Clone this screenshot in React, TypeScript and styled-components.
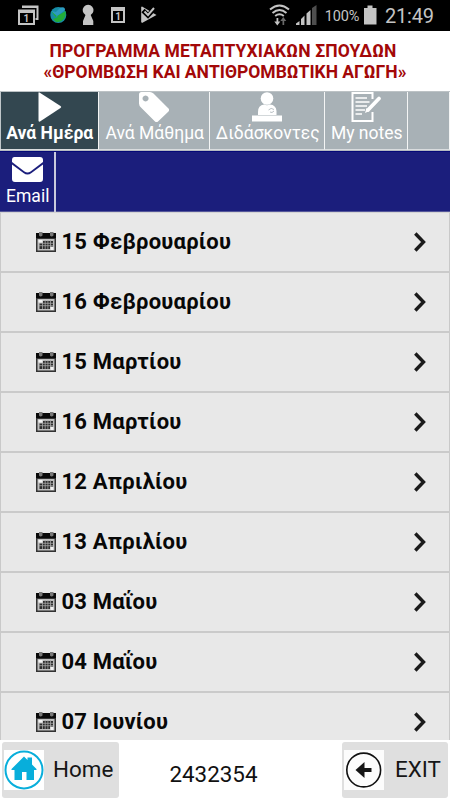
import React from "react";
import styled, { createGlobalStyle } from "styled-components";

const Global = createGlobalStyle`
  * { box-sizing: border-box; }
  body { margin: 0; background: #fff; font-family: Roboto, "Noto Sans", sans-serif; }
`;

const Screen = styled.div`
  width: 450px;
  height: 800px;
  display: flex;
  flex-direction: column;
  overflow: hidden;
  background: #fff;
`;

const StatusBar = styled.div`
  height: 31px;
  flex: none;
  background: #000;
  color: #c4c4c4;
`;

const Title = styled.h1`
  margin: 0;
  height: 60px;
  flex: none;
  padding-top: 10px;
  color: #a30808;
  font-size: 17.5px;
  font-weight: 700;
  line-height: 20.5px;
  text-align: center;
`;

const Line = styled.div<{ $spacing?: number; $inset?: number }>`
  white-space: nowrap;
  letter-spacing: ${(p) => p.$spacing ?? 0}px;
  padding-right: ${(p) => p.$inset ?? 0}px;
`;

const Tabs = styled.nav`
  display: grid;
  grid-template-columns: 99px 111px 115px 83px 42px;
  height: 60px;
  flex: none;
  background: #a8b1b6;
  border-top: 1px solid #bcc2c5;
  border-bottom: 1px solid #b4bac0;
`;

const Tab = styled.div<{ $active?: boolean }>`
  display: flex;
  flex-direction: column;
  align-items: center;
  height: 58px;
  border-right: 1px solid #f4f5f5;
  border-bottom: 1px solid #d9dcde;
  background: ${(p) => (p.$active ? "#334750" : "#a8b1b6")};
  box-shadow: ${(p) => (p.$active ? "inset 1px 0 #c0c7ca" : "none")};
  color: #fff;
  font-size: 17.5px;
  font-weight: ${(p) => (p.$active ? 700 : 400)};
  line-height: 22px;
  white-space: nowrap;
  svg { display: block; flex: none; }
  span { padding-left: 1.5px; }
`;

const MailBar = styled.div`
  height: 61px;
  flex: none;
  background: #1b1e7c;
  border-top: 1px solid #050977;
  border-bottom: 1px solid #55579a;
`;

const MailTab = styled.div`
  width: 56px;
  height: 60px;
  padding: 2px 0 0 1.5px;
  border-right: 2px solid #c9cadd;
  display: flex;
  flex-direction: column;
  align-items: center;
  color: #fff;
  font-size: 17.5px;
  line-height: 22px;
  svg { display: block; }
`;

const List = styled.div`
  height: 528px;
  flex: none;
  overflow: hidden;
  background: #e8e8e8;
  border-left: 1px solid #c9c9c9;
  border-right: 1px solid #c9c9c9;
  border-top: 1px solid #d4d4d4;
`;

const Row = styled.div`
  height: 60px;
  display: flex;
  align-items: center;
  padding: 0 22px 0 35px;
  border-bottom: 2px solid #cacaca;
`;

const RowLabel = styled.span`
  flex: 1;
  margin-left: 5.5px;
  color: #080808;
  font-size: 22px;
  font-weight: 700;
  line-height: 26px;
  letter-spacing: 0.22px;
  white-space: nowrap;
`;

const Footer = styled.footer`
  height: 60px;
  flex: none;
  display: flex;
  justify-content: space-between;
  padding: 2px;
  color: #161616;
  font-size: 22.4px;
`;

const FooterButton = styled.div<{ $width: number; $gap: number }>`
  width: ${(p) => p.$width}px;
  height: 56px;
  border-radius: 3px;
  background: #dfdfdf;
  display: flex;
  align-items: center;
  gap: ${(p) => p.$gap}px;
  padding-left: 2px;
  svg { display: block; flex: none; }
  span { line-height: 26px; padding-bottom: 2px; white-space: nowrap; }
`;

const Code = styled.div`
  padding: 18px 34px 0 0;
  line-height: 28px;
  color: #111;
`;

const StatusGlyphs = () => (
  <svg width="450" height="31" viewBox="0 0 450 31" fill="#c4c4c4" fontFamily="Roboto, sans-serif">
    <path d="M22 8V5.500H38.500V20H35.500V18H36.500V8Z" />
    <path fillRule="evenodd" d="M18 9.500H35V25H18ZM20 13V23H33V13Z" />
    <text x="23.600" y="21.500" fontSize="10" fontWeight="700">1</text>
    <circle cx="58.300" cy="15" r="8" fill="#168ca6" />
    <path d="M51.500 11 56 17 65 10Q65 6 60 8L56 12Z" fill="#2c9bc0" />
    <path d="M51 11 55.500 17 65.500 11C67 17 62 23 56 22L53 19 58 17Z" fill="#22ad38" />
    <path d="M85.500 15A5.400 5.400 0 1 1 90.700 15L93.300 21V25H83V21Z" />
    <path fillRule="evenodd" d="M111 7H125V23H111ZM113 11V21H123V11Z" />
    <text x="115.200" y="20" fontSize="10" fontWeight="700">1</text>
    <path d="M142 6.500 156.500 15 142 23 141.200 22V7Z" />
    <path d="m143 10.500 5 5 8-8.500" fill="none" stroke="#000" strokeWidth="4.600" />
    <path d="m144.500 11.500 3.500 3.500 6-7" fill="none" stroke="#c4c4c4" strokeWidth="2" />
    <g fill="none" stroke="#c4c4c4" strokeWidth="2">
      <path d="M270 9.500Q279.500 1.500 289 9.500M272.500 13Q279.500 7 286.500 13M275.200 16Q279.500 12.500 283.800 16" />
    </g>
    <path d="m276.500 18h1.800v3.500h2l-3 4-3-4h2.200Z" />
    <path d="m282.500 25h1.700v-4h2.100l-3-4-3 4h2.200Z" fill="#696969" />
    <path d="M296 25V23.500L299.500 21V25ZM301 25V19L304.500 15.500V25ZM306.500 25V13.500L310.500 10V25Z" />
    <path d="M312 25V8L316.500 5V25Z" fill="#4e4e4e" />
    <text x="324.800" y="21" fontSize="14.500" textLength="34.500">100%</text>
    <path d="M367.500 5.500H372.500V8H376.500V24.500H364V8H367.500Z" />
    <text x="385" y="22.500" fontSize="20" textLength="49">21:49</text>
  </svg>
);

const PlayIcon = () => (
  <svg width="30" height="30" viewBox="0 0 30 30" fill="#fff">
    <path d="M4.500 1Q4.500 0 5.500.5L26.500 14Q28 15 26.500 16L6 29.500Q4.500 30 4.500 28.500Z" />
  </svg>
);

const TagIcon = () => (
  <svg width="30" height="30" viewBox="0 0 30 30" fill="#fff">
    <path fillRule="evenodd" d="M0 2.500Q0 0 2.500 0H11Q13 0 14.500 1.500L29.500 16.500Q31 18 29.500 19.500L19 29.500Q17.500 31 16 29.500L2 15.500Q0 13.500 0 11.500ZM6.500 3.500A3 3 0 1 0 6.600 3.500Z" />
  </svg>
);

const TeacherIcon = () => (
  <svg width="30" height="30" viewBox="0 0 30 30" fill="#fff">
    <circle cx="15" cy="6.500" r="6.300" />
    <path d="M6 23V20Q6 13 12 12.500Q15 14 18 12.500Q24 13 24.500 19V23Z" />
    <path d="M16.500 18Q19 15 22 17.500M18 20Q20 21.500 22 19" fill="none" stroke="#a8b1b6" strokeWidth=".8" />
    <path d="M0 23.500H30V29.500H0Z" />
  </svg>
);

const NotesIcon = () => (
  <svg width="30" height="30" viewBox="0 0 30 30" fill="none" stroke="#fff" strokeWidth="2">
    <path d="M21.500 7V1H1.500V29H21.500V20" />
    <path d="M4.500 6H16M4.500 10H18.500M4.500 14H16M4.500 18H14M4.500 22H11" strokeWidth="1.700" />
    <path d="M28 6.500 17 18" strokeWidth="3.700" strokeLinecap="round" />
    <path d="M14 21 15.500 16 18.500 19Z" fill="#fff" stroke="none" />
  </svg>
);

const MailIcon = () => (
  <svg width="31" height="31" viewBox="0 0 31 31" fill="#fff">
    <path d="M2.500 3H28Q31 3 31 6V8L18.500 17.500Q15.500 19.500 12.500 17.500L0 8V6Q0 3 2.500 3Z" />
    <path d="M0 10.500 11.500 19Q15.500 22 19.500 19L31 10.500V25Q31 28 28 28H3Q0 28 0 25Z" />
  </svg>
);

const CalendarIcon = () => (
  <svg width="20" height="20" viewBox="0 0 20 20">
    <path d="M0 1H20V20H0Z" fill="#333" />
    <path d="M0 1H20V6H0Z" fill="#090909" />
    <path d="M3 0H6.500V3.500Q4.500 5.500 3 3.500ZM14 0H17.500V3.500Q15.500 5.500 14 3.500Z" fill="#777" />
    <path d="M1.500 7H18.500V18.500H1.500Z" fill="#bebebe" />
    <path d="M2.500 8H6.500V10.500H2.500ZM14.500 15H17.500V18H14.500Z" fill="#f2f2f2" />
    <path d="M7 9H17V14.500H14V17H3.500V11.500H7Z" fill="#2d2d2d" />
    <path d="M6.500 11V17M9.200 8V17M11.900 8V17M14.500 8V15M3 13.700H17M6 11.300H17" stroke="#a5a5a5" strokeWidth=".8" />
  </svg>
);

const Chevron = () => (
  <svg width="14" height="20" viewBox="0 0 14 20" fill="none">
    <path d="m2.300 1.500 8.200 8.500-8.200 8.500" stroke="#1b1b1b" strokeWidth="3.400" />
  </svg>
);

const HomeIcon = () => (
  <svg width="40" height="40" viewBox="0 0 40 40">
    <path fill="#fff" d="M0 0H40V40H0Z" />
    <circle cx="20" cy="20" r="18.500" fill="none" stroke="#08aedb" strokeWidth="2" />
    <path d="M7.500 19 20 6.500 23.500 10V7.500H28V14.500L32.500 19V20H30V30H22.500V22H18V30H10.500V20H7.500Z" fill="#08aedb" />
  </svg>
);

const ExitIcon = () => (
  <svg width="40" height="40" viewBox="0 0 40 40">
    <path fill="#fcfcfc" d="M0 0H40V40H0Z" />
    <circle cx="19.700" cy="20" r="16.900" fill="none" stroke="#111" strokeWidth="1.600" />
    <path d="M11.500 20 20.500 12V18H27.500V22H20.500V28Z" fill="#151515" />
  </svg>
);

const days = [
  "15 Φεβρουαρίου",
  "16 Φεβρουαρίου",
  "15 Μαρτίου",
  "16 Μαρτίου",
  "12 Απριλίου",
  "13 Απριλίου",
  "03 Μαΐου",
  "04 Μαΐου",
  "07 Ιουνίου",
];

export default function App() {
  return (
    <Screen>
      <Global />
      <StatusBar><StatusGlyphs /></StatusBar>
      <Title>
        <Line $spacing={0.12} $inset={4}>ΠΡΟΓΡΑΜΜΑ ΜΕΤΑΠΤΥΧΙΑΚΩΝ ΣΠΟΥΔΩΝ</Line>
        <Line>«ΘΡΟΜΒΩΣΗ ΚΑΙ ΑΝΤΙΘΡΟΜΒΩΤΙΚΗ ΑΓΩΓΗ»</Line>
      </Title>
      <Tabs>
        <Tab $active><PlayIcon /><span>Ανά Ημέρα</span></Tab>
        <Tab><TagIcon /><span>Ανά Μάθημα</span></Tab>
        <Tab><TeacherIcon /><span>Διδάσκοντες</span></Tab>
        <Tab><NotesIcon /><span>My notes</span></Tab>
        <Tab />
      </Tabs>
      <MailBar><MailTab><MailIcon />Email</MailTab></MailBar>
      <List>
        {days.map((label) => (
          <Row key={label}>
            <CalendarIcon />
            <RowLabel>{label}</RowLabel>
            <Chevron />
          </Row>
        ))}
      </List>
      <Footer>
        <FooterButton $width={117} $gap={9}><HomeIcon /><span>Home</span></FooterButton>
        <Code>2432354</Code>
        <FooterButton $width={106} $gap={11}><ExitIcon /><span>EXIT</span></FooterButton>
      </Footer>
    </Screen>
  );
}
